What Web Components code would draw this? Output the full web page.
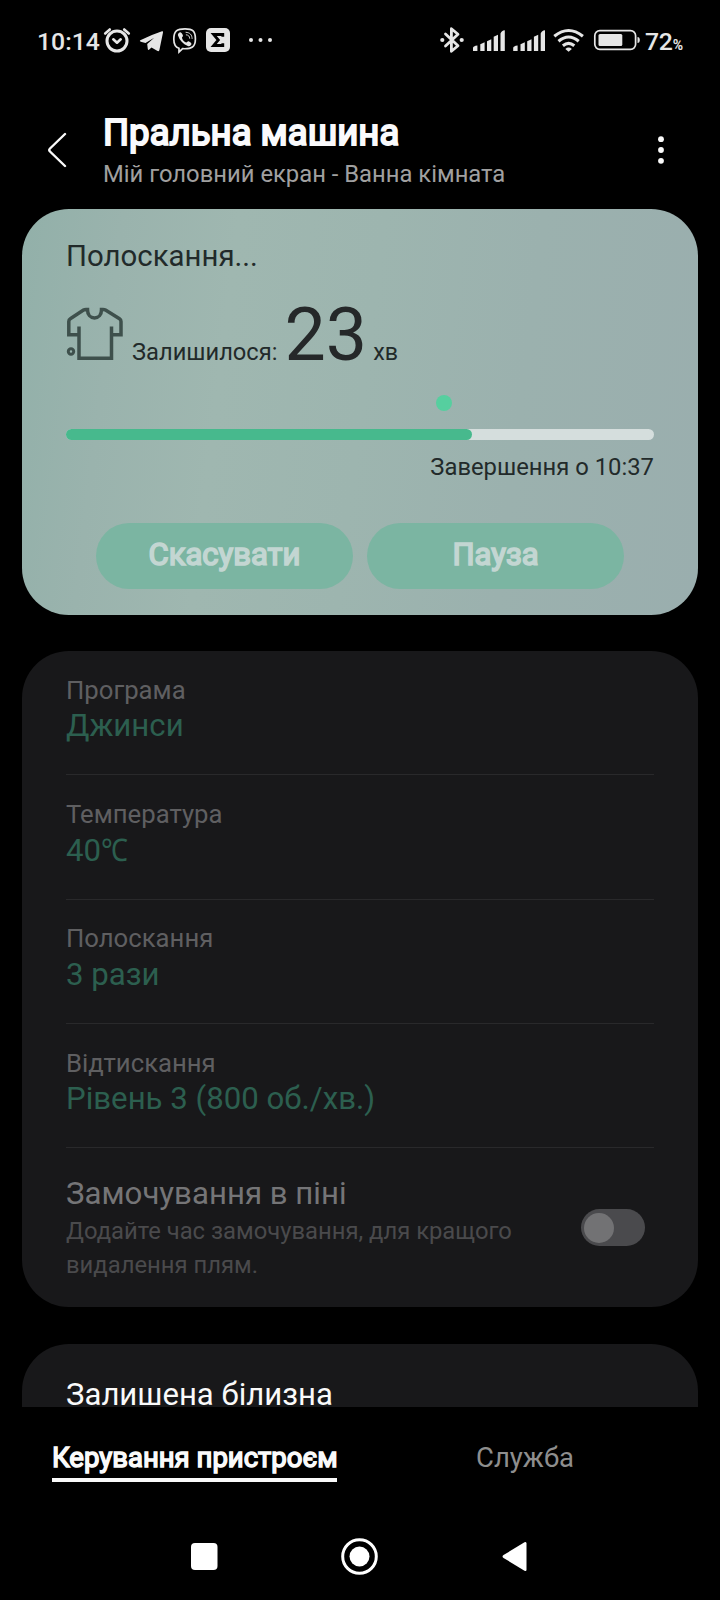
<!DOCTYPE html>
<html lang="uk">
<head>
<meta charset="utf-8">
<title>Пральна машина</title>
<style>
html,body{margin:0;background:#000}
body{width:720px;height:1600px;overflow:hidden;font-family:Roboto,"Noto Sans",sans-serif}
</style>
</head>
<body>
<washer-app></washer-app>
<script>
const define = (name, html) => {
  const tpl = document.createElement('template');
  tpl.innerHTML = html;
  customElements.define(name, class extends HTMLElement {
    constructor() {
      super();
      this.attachShadow({mode: 'open'}).append(tpl.content.cloneNode(true));
    }
  });
};

define('status-bar', `
<style>
:host{display:flex;height:80px;padding:0 37px 0 37px;box-sizing:border-box;align-items:center;justify-content:space-between;color:#e6e6e6;font-size:24.800px;font-weight:500}
svg{display:block}
.l,.r{display:flex;align-items:center}
.l span{width:66px;line-height:30px;padding-top:3px}
.pct{display:flex;align-items:baseline;line-height:30px;height:30px;margin-left:4px;padding-top:3px}
.pct span{letter-spacing:-.300px}
small{font-size:14px;font-weight:700;line-height:20px}
</style>
<div class="l"><span>10:14</span>
<svg width="176" height="30" viewBox="103 25 176 30">
  <g fill="none" stroke="#e6e6e6" stroke-linecap="round">
    <circle cx="117" cy="41" r="10" stroke-width="3"/>
    <path d="M113.300 39.300l3.700 3.400 3.700-3.400" stroke-width="2.600" stroke-linejoin="round"/>
    <path d="M105.200 33.500l4.600-4M128.800 33.500l-4.600-4" stroke-width="2.600"/>
  </g>
  <path d="M140.300 40.200Q151 35 162 31.300q1.400-.2 1 1.200L159.400 50q-.6 1.900-2.300.8L151.500 47.500l-2.500 2.300q-.9.5-1.200-.7l-.6-5.100 7-6.200-8.700 5.300-4.700-1.300q-1.700-.7-.5-1.600z" fill="#e6e6e6"/>
  <g fill="none" stroke="#e6e6e6" stroke-linecap="round">
    <path d="M185 28.800c-8 0-11.200 2.400-11.200 10.200 0 5.600 1.700 8.300 5.200 9.300v3.700l3.600-3.300c9.200.5 12.800-1.700 12.800-9.700 0-7.800-2.700-10.200-10.400-10.200z" stroke-width="1.700"/>
    <path d="M186 32.300c4 .2 6 2.400 6.100 6.200M186.300 34.800c2.200.2 3.300 1.400 3.400 3.500" stroke-width=".9"/>
  </g>
  <path d="M179.300 32.700c1.200-.8 2.200-.3 3.500 2.400.8 1.500-1.100 1.900-.8 3 .6 2.200 2 3.700 4.100 4.400 1.100.2 1.600-1.800 3-.9 2.600 1.500 2.800 2.500 1.900 3.500-1 1.200-2 1.500-3.200 1-4.900-2.200-8.100-5.600-9.800-10.600-.3-1.100.2-2 1.300-2.800z" fill="#e6e6e6"/>
  <rect x="206" y="28" width="24" height="24" rx="5" fill="#e6e6e6"/>
  <path d="M222.800 36.800v-2.300h-9.200l4.700 5.500-4.700 5.500h9.200v-2.300" fill="none" stroke="#000" stroke-width="2.800"/>
  <g fill="#e6e6e6"><circle cx="251" cy="40" r="2"/><circle cx="260.500" cy="40" r="2"/><circle cx="270" cy="40" r="2"/></g>
</svg></div>
<div class="r">
<svg width="202" height="30" viewBox="439 25 202 30">
  <path d="M445.500 34l12.500 11.700-6.600 5.600v-22.600l6.600 5.600-12.500 11.700" fill="none" stroke="#e6e6e6" stroke-width="2.800" stroke-linejoin="round" stroke-linecap="round"/>
  <circle cx="442.300" cy="40" r="2.100" fill="#e6e6e6"/><circle cx="461.700" cy="40" r="2.100" fill="#e6e6e6"/>
  <path fill="#e6e6e6" d="M473 48q0-2 4.400-2.500v5.500h-4.400zM480.300 44.200l4.300-2v8.800h-4.300zM487 41.200l4.300-2v11.800h-4.300zM493.700 36.700l4.300-2v16.300h-4.300zM500.500 33.500q1-3 4.300-3.300v20.800h-4.300z"/>
  <path transform="translate(40.200)" fill="#e6e6e6" d="M473 48q0-2 4.400-2.500v5.500h-4.400zM480.300 44.200l4.300-2v8.800h-4.300zM487 41.200l4.300-2v11.800h-4.300zM493.700 36.700l4.300-2v16.300h-4.300zM500.500 33.500q1-3 4.300-3.300v20.800h-4.300z"/>
  <g fill="none" stroke="#e6e6e6" stroke-width="3.100">
    <path d="M554.300 36.300q14.300-11.600 28.600 0M558.500 41.200q10.100-8.400 20.200 0M562.900 45.800q5.700-4.700 11.400 0"/>
  </g>
  <path d="M565.300 49q3.300-2.800 6.600 0l-3.300 2.800z" fill="#e6e6e6"/>
  <rect x="594.800" y="30.700" width="40.800" height="18.600" rx="5" fill="none" stroke="#e6e6e6" stroke-width="1.700"/>
  <rect x="598.500" y="34" width="23.800" height="12" rx="1.500" fill="#e6e6e6"/>
  <path d="M637.500 37q2.300 0 2.300 3t-2.300 3z" fill="#e6e6e6"/>
</svg>
<div class="pct"><span>72</span><small>%</small></div></div>`);

define('page-header', `
<style>
:host{display:flex;height:129px;box-sizing:border-box;padding-left:47px}
.back{margin-top:52px;width:20px;height:36px}
.t{margin-left:36px;padding-top:28.800px;flex:1;white-space:nowrap}
.h{font-size:36.600px;line-height:48px;color:#fafafc;-webkit-text-stroke:2px #fafafc}
.s{font-size:23.800px;line-height:30px;color:#a0a0a0;margin-top:2.300px}
.more{margin:55px 53.500px 0 0;width:12px;height:30px}
</style>
<svg class="back" viewBox="0 0 20 36"><path d="M18 2L3 16.500q-1.500 1.500 0 3L18 34" fill="none" stroke="#fafafa" stroke-width="2.400" stroke-linecap="round"/></svg>
<div class="t"><div class="h"><slot></slot></div><div class="s"><slot name="sub"></slot></div></div>
<svg class="more" viewBox="0 0 12 30"><g fill="#fafafa"><circle cx="6" cy="4.200" r="2.900"/><circle cx="6" cy="15" r="2.900"/><circle cx="6" cy="25.800" r="2.900"/></g></svg>`);

define('pill-button', `
<style>
:host{display:flex;width:257px;height:66px;box-sizing:border-box;padding-bottom:2px;border-radius:33px;background:#7bb5a2;align-items:center;justify-content:center;font-size:31px;color:#c3d6d2;-webkit-text-stroke:1.700px #c3d6d2;line-height:36px}
</style><span><slot></slot></span>`);

define('cycle-progress', `
<style>
:host{display:block;height:46px}
.dot{width:16px;height:16px;border-radius:50%;background:#56cf9f;margin-left:370px}
.bar{margin-top:18px;height:11px;border-radius:6px;background:#d5dedd}
.fill{width:406px;height:11px;border-radius:6px;background:#47b98d}
</style><div class="dot"></div><div class="bar"><div class="fill"></div></div>`);

define('cycle-card', `
<style>
:host{display:block;box-sizing:border-box;width:676px;height:406px;margin-left:22px;border-radius:47px;padding:27px 44px 0;background:linear-gradient(97deg,#92b0a9 0%,#9ab3ad 14%,#9fb7b0 30%,#9db5af 50%,#9bb1ae 72%,#9aaeae 100%);color:#222a2a}
.st{font-size:29.400px;line-height:40px;white-space:nowrap}
.row{display:flex;align-items:baseline;height:90px;margin-top:14px;line-height:90px;font-size:23.700px;white-space:nowrap}
svg{align-self:flex-start;margin:17px 0 0 0;width:58px;height:54px;flex:none}
.l{margin-left:8px}.n{font-size:73.500px;margin-left:7px;color:#252829}.u{margin-left:6px;font-size:23.300px}
cycle-progress{margin-top:15px}
.end{font-size:23.800px;line-height:30px;text-align:right;margin-top:11px}
.b{display:flex;gap:14px;margin:41px 0 0 30px}
</style>
<div class="st"><slot></slot></div>
<div class="row">
<svg viewBox="0 0 58 54"><g fill="none" stroke="#3e504c" stroke-width="3.500"><path d="M12.500 27.800H2.800V14.500q0-1.800 1.500-2.700L17.500 3q1-.6 2.500-.6H21.500c0 5.500 3 8.500 7 8.500s7-3 7-8.500h1.500q1.500 0 2.500.6L53.500 11.800q1.500.9 1.500 2.700V27.800H45.500"/><path d="M13 19.500V51.300H45.500V19.500"/><circle cx="5" cy="44.500" r="2.700" stroke-width="3"/></g></svg>
<span class="l">Залишилося:</span><span class="n">23</span><span class="u">хв</span></div>
<cycle-progress></cycle-progress>
<div class="end"><slot name="end"></slot></div>
<div class="b"><slot name="actions"></slot></div>`);

define('setting-row', `
<style>
:host{display:block;box-sizing:border-box;height:124.250px;padding-top:23.900px;border-bottom:1px solid #29292b;white-space:nowrap}
.k{font-size:25.700px;line-height:30px;color:#5f5f61}
.v{font-size:31.200px;line-height:38px;margin-top:2.600px;color:#2c5f4f}
</style><div class="k"><slot></slot></div><div class="v"><slot name="value"></slot></div>`);

define('toggle-switch', `
<style>
:host{display:block;box-sizing:border-box;width:64px;height:37px;border-radius:19px;background:#4a4a4d;padding:3.500px 3px}
i{display:block;width:30px;height:30px;border-radius:50%;background:#727274}
</style><i></i>`);

define('toggle-row', `
<style>
:host{display:flex;justify-content:space-between;padding:27px 9px 0 0;white-space:nowrap}
.k{font-size:31.200px;line-height:38px;color:#757577}
.d{font-size:23.800px;line-height:34px;margin-top:1px;color:#4a4a4c}
toggle-switch{margin-top:34px}
</style><div><div class="k"><slot></slot></div><div class="d"><slot name="desc"></slot></div></div><toggle-switch></toggle-switch>`);

define('settings-card', `
<style>
:host{display:block;box-sizing:border-box;width:676px;margin:36px 0 0 22px;border-radius:47px;padding:0 44px;background:#18181a;height:var(--card-h)}
</style><slot></slot>`);

define('tab-bar', `
<style>
:host{display:flex;height:76px;padding-top:33px;box-sizing:border-box;line-height:36px;font-size:27.500px;white-space:nowrap}
.a{color:#fafafa;width:285px;margin-left:52px}
.a span{display:block;-webkit-text-stroke:1.500px #fafafa}
.a:after{content:"";display:block;height:4px;background:#fafafa;margin-top:2px}
.b{margin-left:139px;color:#8e8e8e}
</style><div class="a"><span>Керування пристроєм</span></div><div class="b">Служба</div>`);

define('nav-bar', `
<style>:host{display:block}svg{display:block}</style>
<svg width="720" height="117" viewBox="0 1483 720 117"><g fill="#fff"><rect x="191" y="1543" width="26.500" height="27" rx="4"/><circle cx="359.500" cy="1556.500" r="16.800" fill="none" stroke="#fff" stroke-width="3"/><circle cx="359.500" cy="1556.500" r="10"/><path d="M526.500 1543.500v26q0 2.300-2 1.200l-21-12.800q-2-1.400 0-2.800l21-12.800q2-1.100 2 1.200z"/></g></svg>`);

define('washer-app', `
<style>
:host{display:flex;flex-direction:column;width:720px;height:1600px;background:#000}
main{height:1198px;overflow:hidden}
tab-bar,nav-bar{flex:none}
.c1{--card-h:656px}.c2{--card-h:140px;margin-top:37px}
.w{font-size:31.100px;line-height:32px;color:#fafafa;padding-top:34.500px}
.deg{display:inline-block;transform:scaleX(.87);transform-origin:0 50%}
</style>
<status-bar></status-bar>
<page-header>Пральна машина<span slot="sub">Мій головний екран - Ванна кімната</span></page-header>
<main>
<cycle-card>Полоскання...<span slot="end">Завершення о 10:37</span><pill-button slot="actions">Скасувати</pill-button><pill-button slot="actions">Пауза</pill-button></cycle-card>
<settings-card class="c1">
<setting-row>Програма<span slot="value">Джинси</span></setting-row>
<setting-row>Температура<span slot="value">40<span class="deg">℃</span></span></setting-row>
<setting-row>Полоскання<span slot="value">3 рази</span></setting-row>
<setting-row>Відтискання<span slot="value">Рівень 3 (800 об./хв.)</span></setting-row>
<toggle-row>Замочування в піні<span slot="desc">Додайте час замочування, для кращого<br>видалення плям.</span></toggle-row>
</settings-card>
<settings-card class="c2"><div class="w">Залишена білизна</div></settings-card>
</main>
<tab-bar></tab-bar>
<nav-bar></nav-bar>`);
</script>
</body>
</html>
